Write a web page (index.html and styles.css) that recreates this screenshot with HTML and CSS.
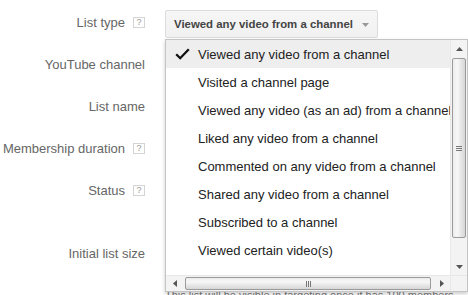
FILE: index.html
```html
<!DOCTYPE html>
<html>

<head>
    <meta charset="UTF-8">
    <title>New remarketing list</title>
    <link rel="stylesheet" href="styles.css">
</head>

<body>
    <div class="form">
        <!-- List type with its open menu -->
        <div class="row">
            <div class="label"><span>List type</span><span class="help">?</span></div>
            <div class="field field-select">
                <div class="select">
                    <button class="select-btn">
                        <span>Viewed any video from a channel</span>
                        <svg class="caret" width="7" height="4" viewBox="0 0 7 4"><polygon points="0,0 7,0 3.5,4" fill="#999"/></svg>
                    </button>

                    <div class="menu">
                        <div class="menu-list">
                            <div class="menu-item selected">
                                <span class="check-slot">
                                    <svg width="15" height="12" viewBox="0 0 15 12"><path d="M1.2 6.2 L5.2 10.2 L13.8 1.2" fill="none" stroke="#111" stroke-width="2.3"/></svg>
                                </span>
                                Viewed any video from a channel
                            </div>
                            <div class="menu-item"><span class="check-slot"></span>Visited a channel page</div>
                            <div class="menu-item"><span class="check-slot"></span>Viewed any video (as an ad) from a channel</div>
                            <div class="menu-item"><span class="check-slot"></span>Liked any video from a channel</div>
                            <div class="menu-item"><span class="check-slot"></span>Commented on any video from a channel</div>
                            <div class="menu-item"><span class="check-slot"></span>Shared any video from a channel</div>
                            <div class="menu-item"><span class="check-slot"></span>Subscribed to a channel</div>
                            <div class="menu-item"><span class="check-slot"></span>Viewed certain video(s)</div>
                        </div>

                        <!-- Vertical scrollbar -->
                        <div class="vscroll">
                            <div class="sb-btn">
                                <svg width="7" height="4" viewBox="0 0 7 4"><polygon points="3.5,0 7,4 0,4" fill="#555"/></svg>
                            </div>
                            <div class="vthumb">
                                <svg width="6" height="5" viewBox="0 0 6 5"><path d="M0 0.5H6M0 2.5H6M0 4.5H6" stroke="#777" stroke-width="1"/></svg>
                            </div>
                            <div class="sb-track"></div>
                            <div class="sb-btn">
                                <svg width="7" height="4" viewBox="0 0 7 4"><polygon points="0,0 7,0 3.5,4" fill="#555"/></svg>
                            </div>
                        </div>

                        <!-- Horizontal scrollbar -->
                        <div class="hscroll">
                            <div class="sb-btn">
                                <svg width="4" height="7" viewBox="0 0 4 7"><polygon points="4,0 4,7 0,3.5" fill="#555"/></svg>
                            </div>
                            <div class="hthumb">
                                <svg width="5" height="6" viewBox="0 0 5 6"><path d="M0.5 0V6M2.5 0V6M4.5 0V6" stroke="#777" stroke-width="1"/></svg>
                            </div>
                            <div class="sb-track"></div>
                            <div class="sb-btn">
                                <svg width="4" height="7" viewBox="0 0 4 7"><polygon points="0,0 4,3.5 0,7" fill="#555"/></svg>
                            </div>
                        </div>
                        <div class="corner"></div>
                    </div>
                </div>
            </div>
        </div>

        <div class="row">
            <div class="label"><span>YouTube channel</span></div>
            <div class="field"></div>
        </div>

        <div class="row">
            <div class="label"><span>List name</span></div>
            <div class="field"></div>
        </div>

        <div class="row">
            <div class="label"><span>Membership duration</span><span class="help">?</span></div>
            <div class="field"></div>
        </div>

        <div class="row">
            <div class="label"><span>Status</span><span class="help">?</span></div>
            <div class="field"></div>
        </div>

        <!-- Initial list size -->
        <div class="row row-size">
            <div class="label"><span>Initial list size</span></div>
            <div class="field">
                <div class="size-box"></div>
                <p class="hint">This list will be visible in targeting once it has 100 members.</p>
            </div>
        </div>
    </div>
</body>

</html>
```

FILE: styles.css
```css
* {
    box-sizing: border-box;
}

html,
body {
    min-height: 295px;
}

body {
    margin: 0;
    font-family: "Liberation Sans", Arial, sans-serif;
    font-size: 13px;
    color: #222;
    background: #fff;
}

.form {
    padding-top: 1px;
    padding-bottom: 20px;
}

.row {
    display: flex;
    height: 42px;
}

.row-size {
    height: auto;
    margin-top: 21px;
    align-items: flex-start;
}

.label {
    width: 145px;
    height: 42px;
    display: flex;
    align-items: center;
    justify-content: flex-end;
    color: #666;
    white-space: nowrap;
}

.help {
    width: 12px;
    height: 11px;
    margin-left: 8px;
    border: 1px solid #d4d4d4;
    font-size: 9px;
    line-height: 9px;
    color: #999;
    text-align: center;
}

.field {
    margin-left: 20px;
    flex: 1;
}

.field-select {
    padding-top: 9px;
}

.select {
    position: relative;
    display: inline-block;
}

.select-btn {
    display: flex;
    align-items: center;
    height: 28px;
    padding: 0 8px 0 8px;
    border: 1px solid #dcdcdc;
    border-radius: 2px;
    background: linear-gradient(#f6f6f6, #f1f1f1);
    font-family: "Liberation Sans", Arial, sans-serif;
    font-size: 11.4px;
    font-weight: bold;
    color: #444;
    white-space: nowrap;
}

.caret {
    margin-left: 9px;
    margin-top: 1px;
}

/* open menu of the list type */
.menu {
    position: absolute;
    top: calc(100% + 1px);
    left: 0;
    width: 303px;
    height: 253px;
    border: 1px solid #c4c4c4;
    background: #fff;
    box-shadow: 0 2px 4px rgba(0, 0, 0, 0.2);
    display: grid;
    grid-template-columns: 284px 17px;
    grid-template-rows: 235px 16px;
    z-index: 2;
}

.menu-list {
    grid-column: 1;
    grid-row: 1;
    overflow: hidden;
}

.menu-item {
    display: flex;
    align-items: center;
    height: 28px;
    padding-left: 9px;
    white-space: nowrap;
    color: #222;
}

.menu-item.selected {
    background: #eeeeee;
}

.check-slot {
    width: 23px;
    height: 12px;
    flex: none;
    display: flex;
    margin-top: -1px;
}

/* scrollbars */
.vscroll {
    grid-column: 2;
    grid-row: 1;
    display: flex;
    flex-direction: column;
    background: #f3f3f3;
    border-left: 1px solid #e8e8e8;
}

.hscroll {
    grid-column: 1;
    grid-row: 2;
    display: flex;
    background: #f3f3f3;
    border-top: 1px solid #e8e8e8;
}

.vscroll .sb-btn {
    height: 17px;
    flex: none;
    display: flex;
    align-items: center;
    justify-content: center;
}

.hscroll .sb-btn {
    width: 17px;
    flex: none;
    display: flex;
    align-items: center;
    justify-content: center;
}

.sb-track {
    flex: 1;
}

.vthumb {
    height: 180px;
    flex: none;
    margin: 1px 1px 0 1px;
    border: 1px solid #9a9a9a;
    border-radius: 2px;
    background: linear-gradient(to right, #ececec, #f7f7f7 35%, #d6d6d6);
    display: flex;
    align-items: center;
    justify-content: center;
}

.hthumb {
    width: 246px;
    flex: none;
    margin: 1px 0 1px 2px;
    border: 1px solid #9a9a9a;
    border-radius: 2px;
    background: linear-gradient(#ececec, #f7f7f7 35%, #d6d6d6);
    display: flex;
    align-items: center;
    justify-content: center;
}

.corner {
    grid-column: 2;
    grid-row: 2;
    background: #f3f3f3;
    border-top: 1px solid #e8e8e8;
    border-left: 1px solid #e8e8e8;
}

.size-box {
    height: 42px;
}

.hint {
    margin: 14px 0 0 0;
    font-size: 11px;
    line-height: 14px;
    color: #777;
    white-space: nowrap;
}
```
